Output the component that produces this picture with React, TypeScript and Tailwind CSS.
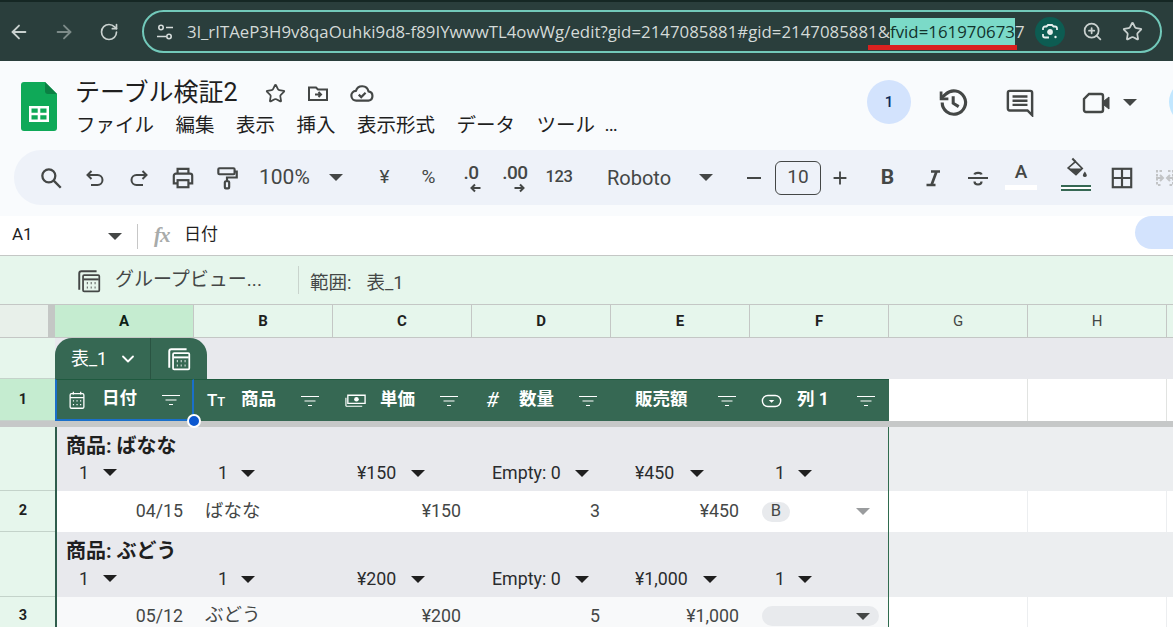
import { ArrowLeft, ArrowRight, ChevronDown, RotateCw, Star, ZoomIn } from "lucide-react";
import type { ReactNode } from "react";

const Ico = ({ size = 24, className = "", children }: { size?: number; className?: string; children: ReactNode }) => (
  <svg width={size} height={size} viewBox="0 0 24 24" fill="none" stroke="currentColor" strokeWidth="2" className={className}>
    {children}
  </svg>
);

const Caret = ({ className = "" }: { className?: string }) => (
  <span className={`block w-0 h-0 border-x-[7px] border-x-transparent border-t-[7px] ${className}`} />
);

const Sep = ({ className = "h-[30px]" }: { className?: string }) => <span className={`w-px bg-[#c7c7c7] ${className}`} />;

const CalcIcon = ({ size = 26 }: { size?: number }) => (
  <Ico size={size}>
    <path d="M3 20V5c0-1.200.8-2 2-2h14" strokeWidth="1.800" />
    <rect x="6.500" y="6.500" width="15" height="15" rx="1" strokeWidth="1.600" />
    <path d="M7 10.500h14" strokeWidth="1.800" />
    <path d="M10 14h.8M13.600 14h.8M17.200 14h.8M10 18h.8M13.600 18h.8M17.200 18h.8" strokeWidth="2" />
  </Ico>
);

const FilterIcon = () => (
  <svg width="20" height="12" viewBox="0 0 20 12" className="shrink-0" stroke="#fff" strokeWidth="1.2">
    <path d="M1 1.500h18M4.500 6h11M8 10.500h4" />
  </svg>
);

const TopBar = () => (
  <div className="h-[61px] bg-[#2a3e3c] border-t-2 border-t-[#152724] flex items-center text-[#c9d1cf] shrink-0">
    <div className="w-[142px] flex items-center shrink-0">
      <ArrowLeft size={22} className="ml-[8px]" />
      <ArrowRight size={22} className="ml-[23px] text-[#7d8b89]" />
      <RotateCw size={20} className="ml-[24px]" />
    </div>
    <div className="relative w-[1020px] h-[43px] border-2 border-[#72c9ba] rounded-full flex items-center">
      <svg width="20" height="20" viewBox="0 0 20 20" className="ml-[11px] shrink-0" fill="none" stroke="#d5dcda" strokeWidth="1.6">
        <circle cx="6" cy="5.500" r="2.200" />
        <circle cx="14" cy="14.500" r="2.200" />
        <path d="M11 5.500h7M2 14.500h9" />
      </svg>
      <div className="ml-[12px] w-[838px] text-[16.800px] whitespace-nowrap [font-family:'Open_Sans',sans-serif] tracking-[0.03px] leading-[28px] text-[#d4dad8]">
        3l_rITAeP3H9v8qaOuhki9d8-f89IYwwwTL4owWg/edit?gid=2147085881#gid=2147085881&amp;
        <span className="bg-[#7bdac8] text-[#12332d] inline-block">fvid=161970673</span>7
      </div>
      <span className="ml-[10px] w-[30px] h-[30px] rounded-full bg-[#0d5c52] flex items-center justify-center shrink-0">
        <svg width="20" height="20" viewBox="0 0 20 20" fill="none" stroke="#e6efed" strokeWidth="1.8">
          <path d="M3 8V6.500A2 2 0 0 1 5 4.500h1.500L8 3h4l1.500 1.500H15a2 2 0 0 1 2 2V8M3 12v1.500a2 2 0 0 0 2 2h4" />
          <circle cx="10" cy="10" r="2" fill="#e6efed" />
          <circle cx="15.500" cy="15" r="1.200" fill="#e6efed" stroke="none" />
        </svg>
      </span>
      <ZoomIn size={21} className="ml-[17px] shrink-0" />
      <Star size={21} className="ml-[19px] shrink-0" />
      <span className="absolute left-[724px] top-[33px] w-[149px] h-[5px] bg-[#d9211f]" />
    </div>
  </div>
);

const Header = () => (
  <div className="h-[89px] bg-[#f9fbfd] flex shrink-0 text-[#1f1f1f]">
    <svg width="36" height="49" viewBox="0 0 36 49" className="ml-[21px] mt-[21px] shrink-0">
      <path d="M3 0h21l12 12v34a3 3 0 0 1-3 3H3a3 3 0 0 1-3-3V3a3 3 0 0 1 3-3z" fill="#0fa958" />
      <path d="M24 0l12 12H27a3 3 0 0 1-3-3z" fill="#0b8043" />
      <path d="M8 24h20v16H8zM10.500 26.500v4.200h6.200v-4.200zM19.300 26.500v4.200h6.200v-4.200zM10.500 33.300v4.200h6.200v-4.200zM19.300 33.300v4.200h6.200v-4.200z" fill="#fff" fillRule="evenodd" />
    </svg>
    <div className="ml-[19px] flex flex-col w-[560px] shrink-0">
      <div className="flex items-center h-[36px] mt-[14px]">
        <span className="text-[25px] leading-[36px] w-[190px] shrink-0 -ml-[1px]">テーブル検証2</span>
        <Star size={21} strokeWidth={2} className="text-[#444746] shrink-0" />
        <Ico size={24} className="ml-[20px] text-[#444746]">
          <path d="M3 6.500V19h18V8.500h-9l-2-2z" />
          <path d="M9 13.500h6M12.500 11l2.500 2.500-2.500 2.500" />
        </Ico>
        <Ico size={26} className="ml-[19px] text-[#444746]">
          <path d="M7 19a4.500 4.500 0 0 1-.6-9A6 6 0 0 1 18 10.500 4.300 4.300 0 0 1 18 19z" />
          <path d="M9 13.500l2.300 2.300 4-4" />
        </Ico>
      </div>
      <div className="flex items-center text-[19.500px] leading-[28px] mt-[1px] whitespace-nowrap">
        <span>ファイル</span>
        <span className="ml-[21.500px]">編集</span>
        <span className="ml-[21.500px]">表示</span>
        <span className="ml-[21.500px]">挿入</span>
        <span className="ml-[21.500px]">表示形式</span>
        <span className="ml-[21.500px]">データ</span>
        <span className="ml-[21.500px]">ツール</span>
        <span className="ml-[10px] font-bold text-[14px]">...</span>
      </div>
    </div>
    <div className="ml-[231px] mt-[19px] flex items-start text-[#444746] shrink-0">
      <span className="w-[44px] h-[44px] rounded-full bg-[#d3e3fd] flex items-center justify-center text-[15px] text-[#0b2a5b] font-medium">1</span>
      <Ico size={33} className="ml-[25px] mt-[6px]">
        <path d="M4.500 12a8.500 8.500 0 1 0 2.700-6.200L3.500 9" strokeWidth="2.300" />
        <path d="M3.700 4v5.300H9" strokeWidth="2" fill="none" />
        <path d="M12.500 7.500v5l4 2.500" strokeWidth="2.200" />
      </Ico>
      <svg width="28" height="28" viewBox="0 0 30 30" className="ml-[37px] mt-[9px]" fill="none" stroke="currentColor" strokeWidth="2.600">
        <path d="M4 2h22a2 2 0 0 1 2 2v24l-5-5H4a2 2 0 0 1-2-2V4a2 2 0 0 1 2-2z" />
        <path d="M7 8h16M7 12.500h16M7 17h16" />
      </svg>
      <svg width="28" height="22" viewBox="0 0 28 22" className="ml-[48px] mt-[12px]" fill="none" stroke="currentColor" strokeWidth="2.400">
        <path d="M7 2h12a2 2 0 0 1 2 2v14a2 2 0 0 1-2 2H4a2 2 0 0 1-2-2V7z" />
        <path d="M22 9l5-4v12l-5-4z" fill="currentColor" strokeWidth="1" />
      </svg>
      <Caret className="ml-[13px] mt-[19px] border-t-[#444746] border-x-[5px] border-t-[5px]" />
      <span className="ml-[32px] w-[44px] h-[44px] rounded-full bg-[#c2e7ff] shrink-0" />
    </div>
  </div>
);

const Btn = ({ w = 44, children }: { w?: number; children: ReactNode }) => (
  <span className="h-[40px] flex items-center justify-center shrink-0" style={{ width: w }}>
    {children}
  </span>
);

const Toolbar = () => (
  <div className="h-[66px] bg-[#f9fbfd] shrink-0 pl-[14px]">
    <div className="h-[55px] bg-[#eef2f9] rounded-l-[27px] flex items-center pl-[15px] text-[#444746] whitespace-nowrap">
      <Btn>
        <Ico size={26}>
          <circle cx="10" cy="10" r="6" strokeWidth="2.100" />
          <path d="M14.500 14.500L21 21" strokeWidth="2.200" />
        </Ico>
      </Btn>
      <Btn>
        <Ico>
          <path d="M8.500 5L4.500 9l4 4" strokeWidth="2" />
          <path d="M5 9h9.500a5 5 0 0 1 0 10H8" strokeWidth="2" />
        </Ico>
      </Btn>
      <Btn>
        <Ico>
          <path d="M15.500 5l4 4-4 4" strokeWidth="2" />
          <path d="M19 9H9.500a5 5 0 0 0 0 10H16" strokeWidth="2" />
        </Ico>
      </Btn>
      <Btn>
        <Ico size={26}>
          <path d="M7 8V3.500h10V8M7 17H3.500v-7a2 2 0 0 1 2-2h13a2 2 0 0 1 2 2v7H17" />
          <rect x="7" y="14" width="10" height="6.500" />
        </Ico>
      </Btn>
      <Btn>
        <Ico size={26}>
          <rect x="4" y="3" width="15" height="5.500" rx="1" />
          <path d="M19 6h2v5.500h-9V15" />
          <rect x="10" y="15" width="4" height="6.500" rx="1" />
        </Ico>
      </Btn>
      <span className="w-[80px] pl-[10px] text-[21px] text-[#444746] shrink-0">100%</span>
      <Caret className="border-t-[#444746] border-x-[5px] border-t-[6px]" />
      <Sep className="h-[31px] ml-[18px]" />
      <Btn w={47}>
        <span className="text-[19px]">¥</span>
      </Btn>
      <Btn w={41}>
        <span className="text-[19px]">%</span>
      </Btn>
      <span className="w-[44px] relative h-[40px] flex justify-center shrink-0">
        <span className="text-[19px] font-medium leading-[30px] tracking-[-0.5px]">.0</span>
        <svg width="13" height="10" viewBox="0 0 12 10" className="absolute left-[20px] top-[25px]" fill="none" stroke="currentColor" strokeWidth="2">
          <path d="M11 5H2M5.500 1.500L2 5l3.500 3.500" />
        </svg>
      </span>
      <span className="w-[44px] relative h-[40px] flex justify-center shrink-0">
        <span className="text-[19px] font-medium leading-[30px] tracking-[-0.5px]">.00</span>
        <svg width="13" height="10" viewBox="0 0 12 10" className="absolute left-[20px] top-[25px]" fill="none" stroke="currentColor" strokeWidth="2">
          <path d="M1 5h9M6.500 1.500L10 5 6.500 8.500" />
        </svg>
      </span>
      <Btn w={44}>
        <span className="text-[16.500px] font-medium tracking-[-0.3px]">123</span>
      </Btn>
      <Sep className="h-[31px] ml-[7px]" />
      <span className="ml-[19px] w-[92px] text-[20px] shrink-0">Roboto</span>
      <Caret className="border-t-[#444746] border-x-[5px] border-t-[6px]" />
      <Sep className="h-[31px] ml-[20px]" />
      <Btn w={41}>
        <span className="block w-[14px] h-[2px] bg-[#444746]" />
      </Btn>
      <span className="w-[46px] h-[34px] ml-[1px] border border-[#444746] rounded-[6px] flex items-center justify-center text-[19px] shrink-0">10</span>
      <Btn w={38}>
        <Ico size={22}>
          <path d="M12 5v14M5 12h14" />
        </Ico>
      </Btn>
      <Sep className="h-[31px] ml-[6px]" />
      <Btn w={45}>
        <span className="text-[21px] font-bold">B</span>
      </Btn>
      <Btn w={46}>
        <Ico size={24}>
          <path d="M10 5.500h9M15.500 5.500L10.500 19M5.500 19h9" strokeWidth="2.700" />
        </Ico>
      </Btn>
      <Btn w={43}>
        <Ico size={24}>
          <path d="M2 12h20" />
          <path d="M8.500 8.500c.3-2 6.700-2.500 7 0M8.500 15.500c0 4 7 4 7 0" strokeWidth="2.200" />
        </Ico>
      </Btn>
      <span className="w-[44px] h-[40px] flex flex-col items-center shrink-0">
        <span className="text-[19px] leading-[28px] font-medium">A</span>
        <span className="w-[32px] h-[5px] -mt-[1px] bg-white" />
      </span>
      <Sep className="h-[31px] ml-[6px]" />
      <span className="w-[54px] h-[40px] flex flex-col items-center shrink-0 -mt-[1px]">
        <Ico size={25}>
          <path d="M8 1.500l3 3" strokeWidth="2" />
          <path d="M11 4.500l6.500 6.500L11.500 17 4 10.500z" strokeWidth="1.600" />
          <path d="M5 11h12l-5.500 5.500z" fill="#444746" stroke="none" />
          <path d="M20 14c1.300 1.800 1.800 2.600 1.800 3.400a1.800 1.800 0 0 1-3.600 0c0-.8.500-1.600 1.800-3.400z" fill="#444746" stroke="none" />
        </Ico>
        <span className="w-[30px] h-[6px] mt-[3px] border-y-2 border-y-[#366853] bg-white" />
      </span>
      <Btn w={38}>
        <Ico size={26}>
          <rect x="3.500" y="3.500" width="17" height="17" />
          <path d="M12 3.500v17M3.500 12h17" />
        </Ico>
      </Btn>
      <Btn w={48}>
        <Ico size={24} className="text-[#c2c4c6]">
          <path d="M9 5H4v14h5M15 5h5v14h-5" strokeDasharray="2.500 1.500" />
          <path d="M3 12h7M7 9l3 3-3 3M21 12h-7M17 9l-3 3 3 3" />
        </Ico>
      </Btn>
    </div>
  </div>
);

const FormulaBar = () => (
  <div className="h-[40px] bg-white border-b border-b-[#c4c7c5] flex items-start shrink-0 text-[#1f1f1f]">
    <span className="w-[108px] shrink-0 pl-[12px] leading-[37px] text-[17px]">A1</span>
    <Caret className="mt-[17px] border-t-[#444746] border-x-[5px] border-t-[5px]" />
    <Sep className="h-[25px] mt-[8px] ml-[15px]" />
    <span className="ml-[16px] w-[30px] text-[21px] leading-[38px] font-bold italic text-[#a8abaa] [font-family:'Liberation_Serif',serif] tracking-[-1px]">fx</span>
    <span className="text-[17px] leading-[36px]">日付</span>
    <span className="ml-auto w-[38px] h-[33px] bg-[#d3e3fd] rounded-l-full" />
  </div>
);

const ViewBar = () => (
  <div className="h-[49px] bg-[#e6f6ec] border-b border-b-[#c4c7c5] flex items-center shrink-0 text-[#444746]">
    <span className="ml-[76px] mt-[2px] text-[#444746]">
      <CalcIcon />
    </span>
    <span className="ml-[13px] w-[183px] text-[19px] whitespace-nowrap">グループビュー...</span>
    <Sep className="h-[28px] bg-[#c9d4cd]" />
    <span className="ml-[11px] text-[18.500px] mt-[7px]">範囲:</span>
    <span className="ml-[15px] text-[18.500px] mt-[7px]">表_1</span>
  </div>
);

const colWidths = ["w-[139px]", "w-[139px]", "w-[139px]", "w-[139px]", "w-[139px]", "w-[139px]", "w-[139px]", "w-[139px]"];

const ColumnHeaders = () => (
  <div className="h-[33px] flex shrink-0 bg-[#e6f6ec] border-b border-b-[#c4c7c5]">
    <span className="w-[48px] bg-[#e8f0ea] shrink-0" />
    <span className="w-[7px] bg-[#c4c7c5] shrink-0" />
    {["A", "B", "C", "D", "E", "F", "G", "H"].map((c, i) => (
      <span
        key={c}
        className={`${colWidths[i]} shrink-0 flex items-center justify-center border-r border-r-[#c4c7c5] text-[15px] ${
          i === 0 ? "bg-[#c5ecd0] text-[#0d1f16] font-bold" : i < 6 ? "text-[#1f1f1f] font-bold" : "text-[#444746]"
        }`}
      >
        {c}
      </span>
    ))}
  </div>
);

const Gutter = ({ label, active }: { label?: string; active?: boolean }) => (
  <span
    className={`w-[55px] shrink-0 flex items-center justify-center pr-[9px] text-[14.500px] font-bold border-b border-b-[#c4d3ca] text-[#1f1f1f] ${
      active ? "bg-[#c5ecd0]" : "bg-[#e6f6ec]"
    }`}
  >
    {label}
  </span>
);

const TabRow = () => (
  <div className="h-[41px] flex shrink-0 bg-[#e8e9ed]">
    <Gutter />
    <div className="w-[152px] shrink-0 bg-[#366853] rounded-t-[17px] flex items-center text-white">
      <span className="w-[96px] h-full shrink-0 flex items-center pl-[16px] border-r border-r-[#2a5442]">
        <span className="text-[18px] -mt-[1px]">表_1</span>
        <ChevronDown size={20} strokeWidth={2.2} className="ml-[11px]" />
      </span>
      <span className="pl-[15px]">
        <CalcIcon />
      </span>
    </div>
  </div>
);

const heads: { icon?: ReactNode; label: string; pad: string }[] = [
  {
    label: "日付",
    pad: "pl-[9px] w-[45px]",
    icon: (
      <Ico size={22} className="text-white">
        <rect x="4.500" y="5" width="15" height="16" rx="1.500" strokeWidth="1.400" />
        <path d="M4.500 9.500h15M8 3v3M16 3v3" strokeWidth="1.400" />
        <path d="M7.500 13h1.300M11.400 13h1.300M15.300 13h1.300M7.500 17h1.300M11.400 17h1.300M15.300 17h1.300" strokeWidth="1.400" />
      </Ico>
    ),
  },
  { label: "商品", pad: "pl-[13px] w-[47px]", icon: <span className="text-[17px] leading-none text-white font-medium">T<span className="text-[13px]">T</span></span> },
  {
    label: "単価",
    pad: "pl-[11px] w-[47px]",
    icon: (
      <Ico size={23} className="text-white">
        <path d="M4 15V6.500h18V15z" strokeWidth="1.400" />
        <path d="M2 18h17M2 18V9" strokeWidth="1.200" />
        <circle cx="13" cy="10.700" r="2.400" fill="#fff" stroke="none" />
      </Ico>
    ),
  },
  { label: "数量", pad: "pl-[14px] w-[47px]", icon: <span className="text-[21px] leading-none text-white italic">#</span> },
  { label: "販売額", pad: "w-[24px]" },
  {
    label: "列 1",
    pad: "pl-[11px] w-[47px]",
    icon: (
      <Ico size={22} className="text-white">
        <rect x="1.500" y="6" width="20" height="12" rx="6" strokeWidth="1.500" />
        <path d="M8.500 11h6l-3 3z" fill="#fff" stroke="none" />
      </Ico>
    ),
  },
];

const HeaderRow = () => (
  <div className="h-[42px] flex shrink-0 relative">
    <Gutter label="1" active />
    {heads.map((h, i) => (
      <div
        key={h.label}
        className={`${colWidths[i]} shrink-0 bg-[#366853] border-t border-t-[#1f5a3f] flex items-center text-white ${
          i === 0 ? "border-2 border-[#1a6fc9] pr-[11px]" : "pr-[13px]"
        }`}
      >
        <span className={`${h.pad} shrink-0 flex items-center`}>{h.icon}</span>
        <span className="text-[17.500px] font-bold whitespace-nowrap -mt-[2px]">{h.label}</span>
        <span className="ml-auto">
          <FilterIcon />
        </span>
      </div>
    ))}
    <span className="w-[139px] shrink-0 bg-white border-r border-r-[#e1e3e1]" />
    <span className="w-[139px] shrink-0 bg-white border-r border-r-[#e1e3e1]" />
    <span className="absolute left-[187px] top-[35px] w-[14px] h-[14px] rounded-full bg-[#0b57d0] border-2 border-white" />
  </div>
);

type Sum = { v: string; pad: string; gap: string };

const GroupRow = ({ title, sums, h, lift }: { title: string; sums: Sum[]; h: string; lift: string }) => (
  <div className={`${h} flex shrink-0 bg-[#eceef0]`}>
    <Gutter />
    <div className="w-[834px] shrink-0 bg-[#e8e9ed] shadow-[inset_2px_0_0_#2f5d4c,inset_-1px_0_0_#2f6b4e] flex flex-col">
      <div className="h-[30px] mt-[4px] pl-[11px] text-[20px] leading-[30px] font-bold text-[#1f1f1f] shrink-0">{title}</div>
      <div className={`flex ${lift}`}>
        {sums.map((s, i) => (
          <div key={i} className={`${colWidths[i]} ${s.pad} shrink-0 flex items-center text-[17.800px] leading-[28px] text-[#2a2c2e] ${i === 0 ? "-mt-[1px]" : ""}`}>
            <span>{s.v}</span>
            <Caret className={`${s.gap} border-t-[#1f1f1f] border-x-[7px] border-t-[7px]`} />
          </div>
        ))}
      </div>
    </div>
  </div>
);

const Cell = ({ i, children, className = "" }: { i: number; children?: ReactNode; className?: string }) => (
  <span className={`${colWidths[i]} shrink-0 flex items-center text-[17.800px] text-[#444746] ${className}`}>{children}</span>
);

const DataRow = ({
  n,
  h,
  bg,
  date,
  name,
  price,
  qty,
  total,
  chip,
}: {
  n: string;
  h: string;
  bg: string;
  date: string;
  name: string;
  price: string;
  qty: string;
  total: string;
  chip: ReactNode;
}) => (
  <div className={`${h} flex shrink-0 bg-white`}>
    <Gutter label={n} />
    <div className={`w-[834px] shrink-0 flex shadow-[inset_2px_0_0_#2f5d4c,inset_-1px_0_0_#2f6b4e] ${bg}`}>
      <Cell i={0} className="justify-end pr-[11px]">{date}</Cell>
      <Cell i={1} className="pl-[11px] text-[18.500px]">{name}</Cell>
      <Cell i={2} className="justify-end pr-[11px]">{price}</Cell>
      <Cell i={3} className="justify-end pr-[11px]">{qty}</Cell>
      <Cell i={4} className="justify-end pr-[11px]">{total}</Cell>
      <span className="flex-1 flex items-center">{chip}</span>
    </div>
    <span className="w-[139px] shrink-0 border-r border-r-[#eceef0]" />
    <span className="w-[139px] shrink-0 border-r border-r-[#eceef0]" />
  </div>
);

export default function App() {
  return (
    <div className="w-[1173px] h-[627px] overflow-hidden flex flex-col bg-white [font-family:Roboto,'Noto_Sans_CJK_JP',sans-serif]">
      <TopBar />
      <Header />
      <Toolbar />
      <FormulaBar />
      <ViewBar />
      <ColumnHeaders />
      <TabRow />
      <HeaderRow />
      <div className="h-[6px] bg-[#c6c8c8] shrink-0" />
      <GroupRow
        title="商品: ばなな"
        h="h-[64px]"
        lift="-mt-[2px]"
        sums={[
          { v: "1", pad: "pl-[24px]", gap: "ml-[14px]" },
          { v: "1", pad: "pl-[24px]", gap: "ml-[13px]" },
          { v: "¥150", pad: "pl-[24px]", gap: "ml-[15px]" },
          { v: "Empty: 0", pad: "pl-[20px]", gap: "ml-[14px]" },
          { v: "¥450", pad: "pl-[24px]", gap: "ml-[16px]" },
          { v: "1", pad: "pl-[25px]", gap: "ml-[13px]" },
        ]}
      />
      <DataRow
        n="2"
        h="h-[41px]"
        bg="bg-white"
        date="04/15"
        name="ばなな"
        price="¥150"
        qty="3"
        total="¥450"
        chip={
          <>
            <span className="ml-[12px] w-[28px] h-[20px] rounded-full bg-[#e8eaed] flex items-center justify-center text-[16.500px] text-[#444746]">B</span>
            <Caret className="ml-[66px] border-t-[#9a9c9e] border-x-[5px] border-t-[5px]" />
          </>
        }
      />
      <GroupRow
        title="商品: ぶどう"
        h="h-[65px]"
        lift="-mt-[1px]"
        sums={[
          { v: "1", pad: "pl-[24px]", gap: "ml-[14px]" },
          { v: "1", pad: "pl-[24px]", gap: "ml-[13px]" },
          { v: "¥200", pad: "pl-[24px]", gap: "ml-[15px]" },
          { v: "Empty: 0", pad: "pl-[20px]", gap: "ml-[14px]" },
          { v: "¥1,000", pad: "pl-[24px]", gap: "ml-[15px]" },
          { v: "1", pad: "pl-[25px]", gap: "ml-[13px]" },
        ]}
      />
      <DataRow
        n="3"
        h="h-[38px]"
        bg="bg-[#f8f9fa]"
        date="05/12"
        name="ぶどう"
        price="¥200"
        qty="5"
        total="¥1,000"
        chip={
          <span className="ml-[12px] w-[117px] h-[20px] rounded-full bg-[#e8eaed] flex items-center justify-end pr-[9px]">
            <Caret className="border-t-[#444746] border-x-[6px] border-t-[6px]" />
          </span>
        }
      />
    </div>
  );
}
